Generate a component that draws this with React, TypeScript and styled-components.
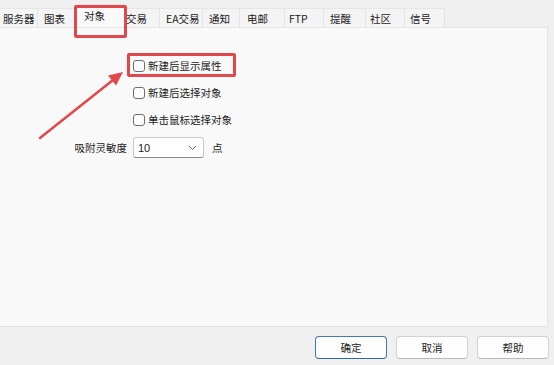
import React from 'react'
import styled, { createGlobalStyle } from 'styled-components'

const GlobalStyle = createGlobalStyle`
  html, body {
    margin: 0;
    padding: 0;
    background: #f0f0f0;
  }
  body {
    font-family: "Noto Sans CJK SC", "Noto Sans", "Liberation Sans", sans-serif;
    font-size: 10.5px;
    color: #1b1b1b;
  }
`

const red = '#e2474c'

const Window = styled.div`
  position: relative;
  width: 554px;
  height: 365px;
  display: flex;
  flex-direction: column;
  background: #f0f0f0;
  overflow: hidden;
`

const TabBar = styled.div`
  display: flex;
  align-items: flex-end;
  height: 27px;
  flex-shrink: 0;
`

const Tab = styled.div<{ $w: number; $pad: number; $active?: boolean }>`
  position: relative;
  box-sizing: border-box;
  width: ${(p) => p.$w}px;
  height: ${(p) => (p.$active ? 23 : 19)}px;
  padding-left: ${(p) => p.$pad}px;
  padding-top: ${(p) => (p.$active ? 3 : 1)}px;
  display: flex;
  align-items: ${(p) => (p.$active ? 'flex-start' : 'center')};
  background: ${(p) => (p.$active ? '#f9f9f9' : '#f4f4f4')};
  border-right: 1px solid #e3e3e3;
  border-top: 1px solid #e6e6e6;
  font-size: 10.5px;
  line-height: 16px;
  white-space: nowrap;
  z-index: ${(p) => (p.$active ? 2 : 1)};
`

const TabMark = styled.span`
  position: absolute;
  left: -1px;
  top: 0;
  width: 53px;
  height: 33px;
  box-sizing: border-box;
  border: 3px solid ${red};
  border-radius: 2px;
  pointer-events: none;
`

const Panel = styled.div`
  width: 548px;
  height: 300px;
  box-sizing: border-box;
  background: #f9f9f9;
  border-right: 1px solid #e3e3e3;
  border-bottom: 1px solid #e3e3e3;
  border-top: 1px solid #e6e6e6;
  padding-top: 24px;
`

const Form = styled.div`
  display: grid;
  grid-template-columns: 127px auto;
  column-gap: 6px;
  align-items: center;
`

const Row = styled.div<{ $h: number }>`
  position: relative;
  grid-column: 2;
  height: ${(p) => p.$h}px;
  display: flex;
  align-items: center;
  gap: 3px;
`

const RowMark = styled.span`
  position: absolute;
  left: -6px;
  top: 1px;
  width: 109px;
  height: 24px;
  box-sizing: border-box;
  border: 3px solid ${red};
  border-radius: 2px;
  pointer-events: none;
`

const Box = styled.span`
  width: 12px;
  height: 12px;
  box-sizing: border-box;
  border: 1px solid #6e6e6e;
  border-radius: 3px;
  background: #ffffff;
  flex-shrink: 0;
`

const Label = styled.div`
  grid-column: 1;
  text-align: right;
  margin-top: 4px;
  line-height: 21px;
`

const SelectRow = styled.div`
  grid-column: 2;
  margin-top: 4px;
  display: flex;
  align-items: center;
  gap: 8px;
`

const Select = styled.div`
  width: 71px;
  height: 21px;
  box-sizing: border-box;
  padding: 0 6px 0 4px;
  display: flex;
  align-items: center;
  justify-content: space-between;
  background: #ffffff;
  border: 1px solid #c9c9c9;
  border-bottom-color: #8a8a8a;
  border-radius: 3px;
  font-family: "Liberation Sans", "Noto Sans CJK SC", sans-serif;
  font-size: 11px;
`

const ButtonBar = styled.div`
  flex: 1;
  display: flex;
  justify-content: flex-end;
  align-items: flex-start;
  gap: 9px;
  padding: 9px 5px 0 0;
`

const Button = styled.button<{ $primary?: boolean }>`
  width: 72px;
  height: 23px;
  box-sizing: border-box;
  padding: 0;
  background: #fdfdfd;
  border: 1px solid ${(p) => (p.$primary ? '#3f79b8' : '#d2d2d2')};
  border-bottom-color: ${(p) => (p.$primary ? '#2e6aab' : '#b8b8b8')};
  border-radius: 4px;
  font-family: "Noto Sans CJK SC", sans-serif;
  font-size: 10.5px;
  color: #1b1b1b;
`

const Arrow = styled.svg`
  position: absolute;
  left: 0;
  top: 0;
  pointer-events: none;
`

const tabs = [
  { t: '服务器', w: 38, pad: 3 },
  { t: '图表', w: 37, pad: 6 },
  { t: '对象', w: 50, pad: 9, active: true },
  { t: '交易', w: 35, pad: 1 },
  { t: 'EA交易', w: 43, pad: 6 },
  { t: '通知', w: 37, pad: 6 },
  { t: '电邮', w: 45, pad: 7 },
  { t: 'FTP', w: 39, pad: 4 },
  { t: '提醒', w: 42, pad: 6 },
  { t: '社区', w: 39, pad: 4 },
  { t: '信号', w: 40, pad: 5 },
]

export default function App() {
  return (
    <Window>
      <GlobalStyle />
      <TabBar>
        {tabs.map((tab) => (
          <Tab key={tab.t} $w={tab.w} $pad={tab.pad} $active={tab.active}>
            {tab.t}
            {tab.active && <TabMark />}
          </Tab>
        ))}
      </TabBar>
      <Panel>
        <Form>
          <Row $h={27}>
            <Box />
            新建后显示属性
            <RowMark />
          </Row>
          <Row $h={27}>
            <Box />
            新建后选择对象
          </Row>
          <Row $h={27}>
            <Box />
            单击鼠标选择对象
          </Row>
          <Label>吸附灵敏度</Label>
          <SelectRow>
            <Select>
              <span>10</span>
              <svg width="9" height="6" viewBox="0 0 9 6">
                <path d="M1 1 L4.5 4.5 L8 1" fill="none" stroke="#6a6a6a" strokeWidth="1" />
              </svg>
            </Select>
            点
          </SelectRow>
        </Form>
      </Panel>
      <ButtonBar>
        <Button $primary>确定</Button>
        <Button>取消</Button>
        <Button>帮助</Button>
      </ButtonBar>
      <Arrow width="554" height="365" viewBox="0 0 554 365">
        <line x1="40" y1="138" x2="113" y2="80" stroke={red} strokeWidth="2.5" strokeLinecap="round" />
        <polygon points="123,72 116,85.5 108,75.5" fill={red} />
      </Arrow>
    </Window>
  )
}
